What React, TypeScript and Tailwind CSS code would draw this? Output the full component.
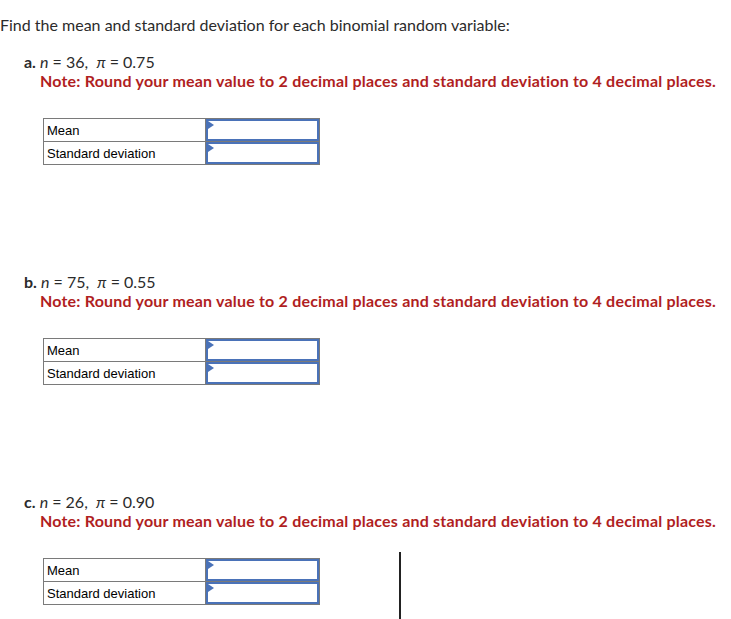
const parts = [
  { letter: "a.", n: "36", p: "0.75" },
  { letter: "b.", n: "75", p: "0.55" },
  { letter: "c.", n: "26", p: "0.90" },
];

function InputCell() {
  return (
    <div className="relative flex-1 border-2 border-[#4a72b8] bg-white">
      <span className="absolute left-0 top-0 h-0 w-0 border-y-[4px] border-l-[6px] border-y-transparent border-l-[#4a72b8]" />
    </div>
  );
}

function AnswerTable() {
  return (
    <div className="ml-[43px] w-[277px] border border-[#7a7a7a] font-['Liberation_Sans',Arial,sans-serif] text-[13px] text-black">
      <div className="flex h-[23px] border-b border-[#7a7a7a]">
        <div className="flex w-[162px] items-center border-r border-[#7a7a7a] px-[3px] pt-[1px]">
          Mean
        </div>
        <InputCell />
      </div>
      <div className="flex h-[22px]">
        <div className="flex w-[162px] items-center border-r border-[#7a7a7a] px-[3px] pt-[1px]">
          Standard deviation
        </div>
        <InputCell />
      </div>
    </div>
  );
}

export default function App() {
  return (
    <div className="relative h-[619px] overflow-hidden bg-white font-['Lato','Open_Sans',sans-serif] text-[#2b2b2b]">
      <div className="pt-[16px] text-[16px] leading-[18px]">
        Find the mean and standard deviation for each binomial random variable:
      </div>

      <div className="pt-[19px]">
        {parts.map((part) => (
          <div key={part.letter} className="h-[220px]">
            <div className="pl-[24px] text-[16px] leading-[18px]">
              <span className="font-bold">{part.letter}</span>{" "}
              <i>n</i> = {part.n},&nbsp; <i>π</i> = {part.p}
            </div>
            <div className="mt-[1px] pl-[40px] text-[16px] font-bold leading-[18px] tracking-[0.2px] text-[#b01e22]">
              Note: Round your mean value to 2 decimal places and standard deviation to 4 decimal places.
            </div>
            <div className="pt-[28px]">
              <AnswerTable />
            </div>
          </div>
        ))}
      </div>

      <div className="absolute left-[399px] top-[552px] h-[67px] w-[2px] bg-[#222]" />
    </div>
  );
}
